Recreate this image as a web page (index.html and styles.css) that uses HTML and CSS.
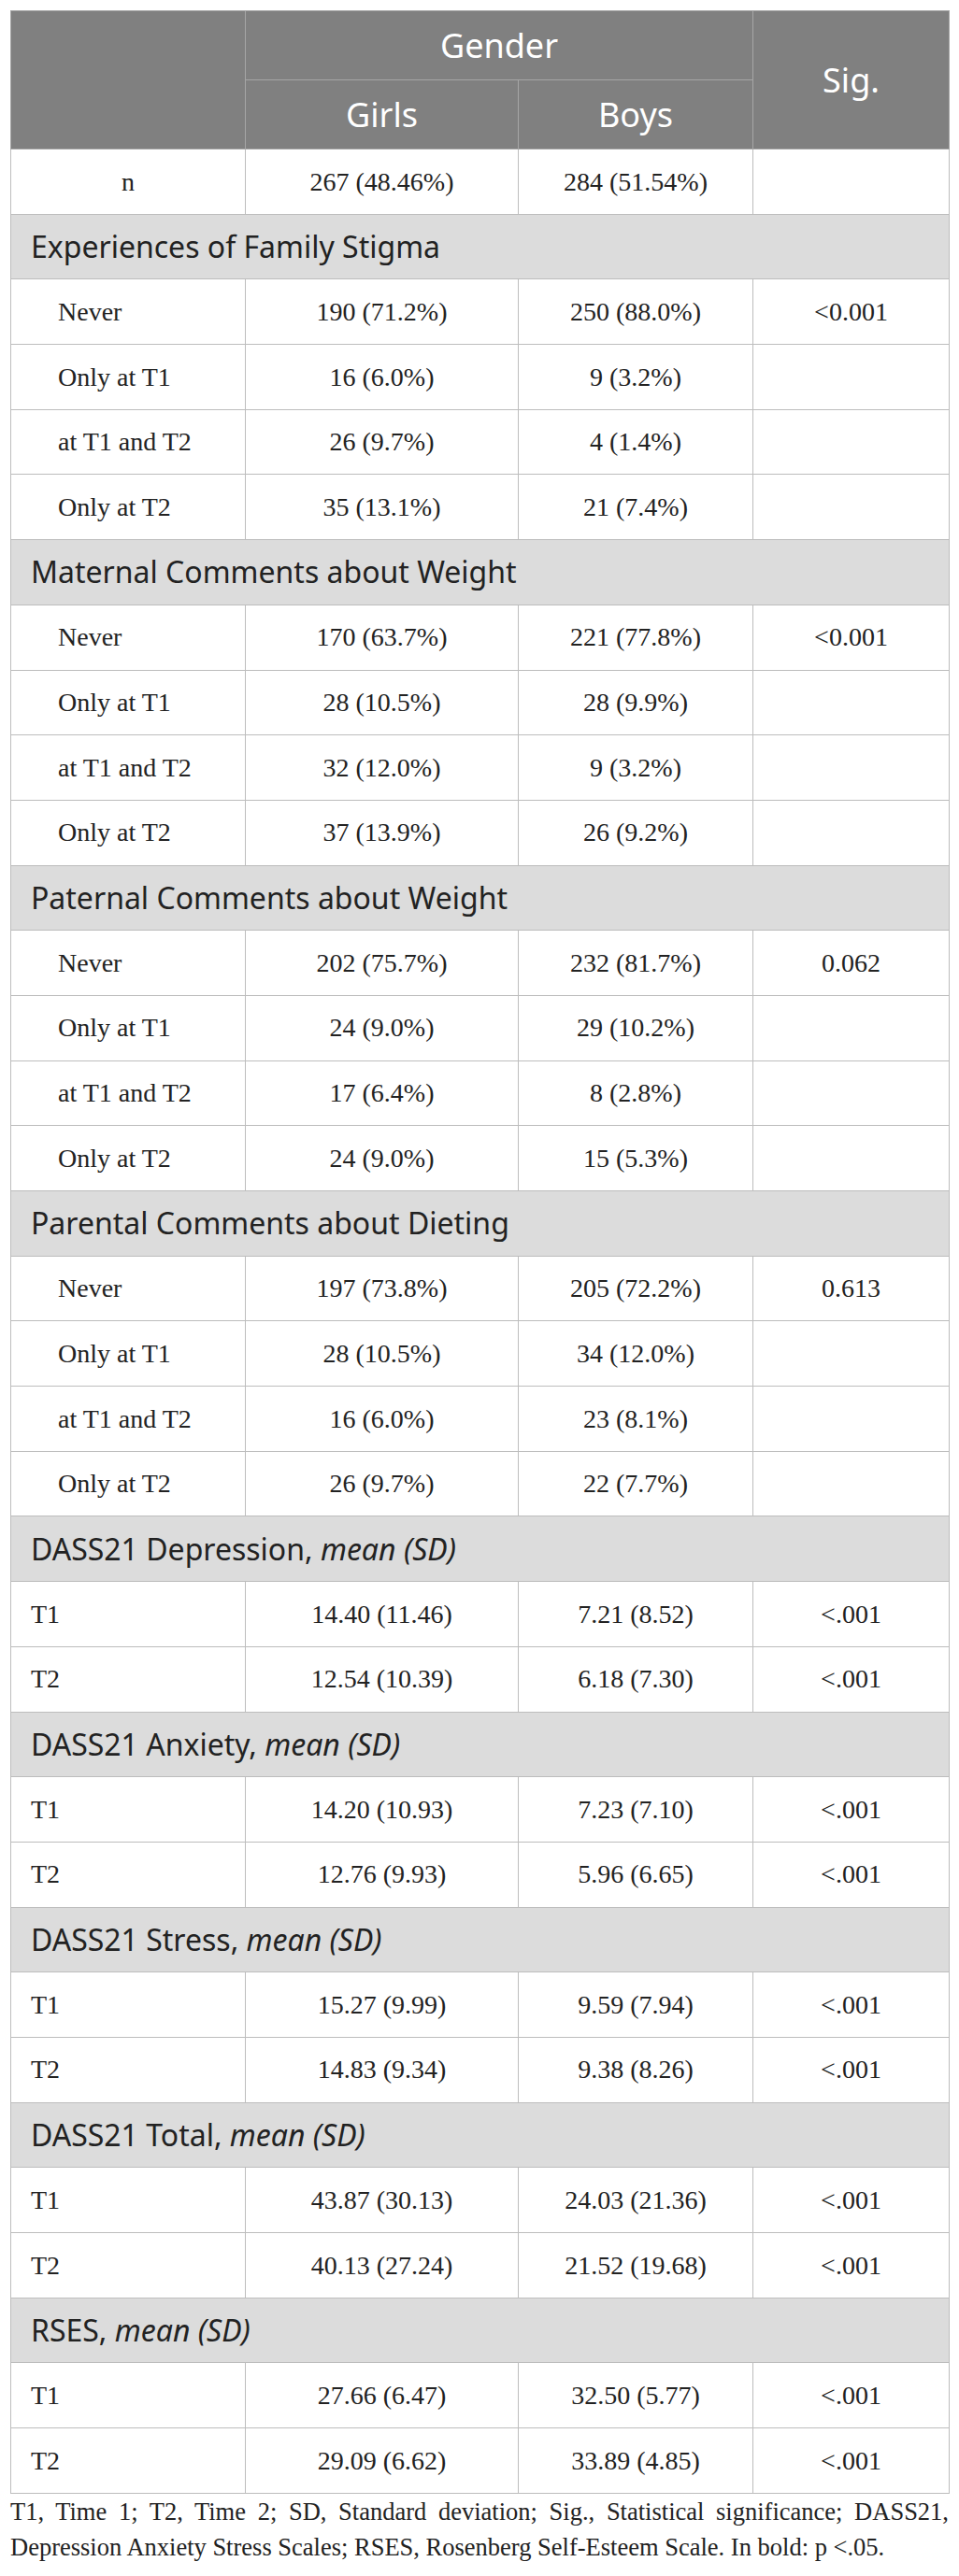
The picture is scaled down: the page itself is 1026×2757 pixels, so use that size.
FILE: index.html
```html
<!DOCTYPE html>
<html lang="en">
<head>
<meta charset="utf-8">
<title>Table</title>
<link rel="stylesheet" href="styles.css">
</head>
<body>
<div class="wrap">
<table class="data">
  <colgroup>
    <col class="c1"><col class="c2"><col class="c3"><col class="c4">
  </colgroup>
  <thead>
    <tr class="h1">
      <th rowspan="2"></th>
      <th colspan="2">Gender</th>
      <th rowspan="2">Sig.</th>
    </tr>
    <tr class="h2">
      <th>Girls</th>
      <th>Boys</th>
    </tr>
  </thead>
  <tbody>
    <tr><td class="center">n</td><td>267 (48.46%)</td><td>284 (51.54%)</td><td></td></tr>

    <tr class="sec"><td colspan="4">Experiences of Family Stigma</td></tr>
    <tr><td class="sub">Never</td><td>190 (71.2%)</td><td>250 (88.0%)</td><td>&lt;0.001</td></tr>
    <tr><td class="sub">Only at T1</td><td>16 (6.0%)</td><td>9 (3.2%)</td><td></td></tr>
    <tr><td class="sub">at T1 and T2</td><td>26 (9.7%)</td><td>4 (1.4%)</td><td></td></tr>
    <tr><td class="sub">Only at T2</td><td>35 (13.1%)</td><td>21 (7.4%)</td><td></td></tr>

    <tr class="sec"><td colspan="4">Maternal Comments about Weight</td></tr>
    <tr><td class="sub">Never</td><td>170 (63.7%)</td><td>221 (77.8%)</td><td>&lt;0.001</td></tr>
    <tr><td class="sub">Only at T1</td><td>28 (10.5%)</td><td>28 (9.9%)</td><td></td></tr>
    <tr><td class="sub">at T1 and T2</td><td>32 (12.0%)</td><td>9 (3.2%)</td><td></td></tr>
    <tr><td class="sub">Only at T2</td><td>37 (13.9%)</td><td>26 (9.2%)</td><td></td></tr>

    <tr class="sec"><td colspan="4">Paternal Comments about Weight</td></tr>
    <tr><td class="sub">Never</td><td>202 (75.7%)</td><td>232 (81.7%)</td><td>0.062</td></tr>
    <tr><td class="sub">Only at T1</td><td>24 (9.0%)</td><td>29 (10.2%)</td><td></td></tr>
    <tr><td class="sub">at T1 and T2</td><td>17 (6.4%)</td><td>8 (2.8%)</td><td></td></tr>
    <tr><td class="sub">Only at T2</td><td>24 (9.0%)</td><td>15 (5.3%)</td><td></td></tr>

    <tr class="sec"><td colspan="4">Parental Comments about Dieting</td></tr>
    <tr><td class="sub">Never</td><td>197 (73.8%)</td><td>205 (72.2%)</td><td>0.613</td></tr>
    <tr><td class="sub">Only at T1</td><td>28 (10.5%)</td><td>34 (12.0%)</td><td></td></tr>
    <tr><td class="sub">at T1 and T2</td><td>16 (6.0%)</td><td>23 (8.1%)</td><td></td></tr>
    <tr><td class="sub">Only at T2</td><td>26 (9.7%)</td><td>22 (7.7%)</td><td></td></tr>

    <tr class="sec"><td colspan="4">DASS21 Depression, <em>mean (SD)</em></td></tr>
    <tr><td class="lbl">T1</td><td>14.40 (11.46)</td><td>7.21 (8.52)</td><td>&lt;.001</td></tr>
    <tr><td class="lbl">T2</td><td>12.54 (10.39)</td><td>6.18 (7.30)</td><td>&lt;.001</td></tr>

    <tr class="sec"><td colspan="4">DASS21 Anxiety, <em>mean (SD)</em></td></tr>
    <tr><td class="lbl">T1</td><td>14.20 (10.93)</td><td>7.23 (7.10)</td><td>&lt;.001</td></tr>
    <tr><td class="lbl">T2</td><td>12.76 (9.93)</td><td>5.96 (6.65)</td><td>&lt;.001</td></tr>

    <tr class="sec"><td colspan="4">DASS21 Stress, <em>mean (SD)</em></td></tr>
    <tr><td class="lbl">T1</td><td>15.27 (9.99)</td><td>9.59 (7.94)</td><td>&lt;.001</td></tr>
    <tr><td class="lbl">T2</td><td>14.83 (9.34)</td><td>9.38 (8.26)</td><td>&lt;.001</td></tr>

    <tr class="sec"><td colspan="4">DASS21 Total, <em>mean (SD)</em></td></tr>
    <tr><td class="lbl">T1</td><td>43.87 (30.13)</td><td>24.03 (21.36)</td><td>&lt;.001</td></tr>
    <tr><td class="lbl">T2</td><td>40.13 (27.24)</td><td>21.52 (19.68)</td><td>&lt;.001</td></tr>

    <tr class="sec"><td colspan="4">RSES, <em>mean (SD)</em></td></tr>
    <tr><td class="lbl">T1</td><td>27.66 (6.47)</td><td>32.50 (5.77)</td><td>&lt;.001</td></tr>
    <tr><td class="lbl">T2</td><td>29.09 (6.62)</td><td>33.89 (4.85)</td><td>&lt;.001</td></tr>
  </tbody>
</table>
<p class="note">T1, Time 1; T2, Time 2; SD, Standard deviation; Sig., Statistical significance; DASS21, Depression Anxiety Stress Scales; RSES, Rosenberg Self-Esteem Scale. In bold: p &lt;.05.</p>
</div>
</body>
</html>
```

FILE: styles.css
```css
html, body {
  margin: 0;
  padding: 0;
  background: #ffffff;
}

.wrap {
  padding: 11px 11px 0 11px;
}

.data {
  width: 1004px;
  border-collapse: collapse;
  table-layout: fixed;
  font-family: "Liberation Serif", "Times New Roman", serif;
  font-size: 28px;
  color: #222222;
}

.c1 { width: 251px; }
.c2 { width: 292px; }
.c3 { width: 251px; }
.c4 { width: 210px; }

.data th {
  background: #808080;
  color: #ffffff;
  font-family: "Noto Sans", "Open Sans", sans-serif;
  font-weight: 400;
  font-size: 36px;
  line-height: 1.2;
  border: 1px solid #a6a6a6;
  padding: 0;
  text-align: center;
  vertical-align: middle;
}

.data tr.h1, .data tr.h2 {
  height: 74px;
}

.data tbody tr {
  height: 69.7px;
}

.data td {
  border: 1px solid #bdbdbd;
  padding: 0;
  text-align: center;
  vertical-align: middle;
  line-height: 1.2;
}

.data td.center {
  text-align: center;
}

.data td.sub {
  text-align: left;
  padding-left: 50px;
}

.data td.lbl {
  text-align: left;
  padding-left: 21px;
}

.data tr.sec td {
  background: #dcdcdc;
  text-align: left;
  padding-left: 21px;
  font-family: "Noto Sans", "Open Sans", sans-serif;
  font-size: 32px;
  color: #222222;
}

.data tr.sec em {
  font-style: italic;
}

.note {
  margin: 0;
  font-family: "Liberation Serif", "Times New Roman", serif;
  font-size: 26.5px;
  line-height: 38px;
  color: #222222;
  text-align: justify;
  width: 1004px;
}
```
